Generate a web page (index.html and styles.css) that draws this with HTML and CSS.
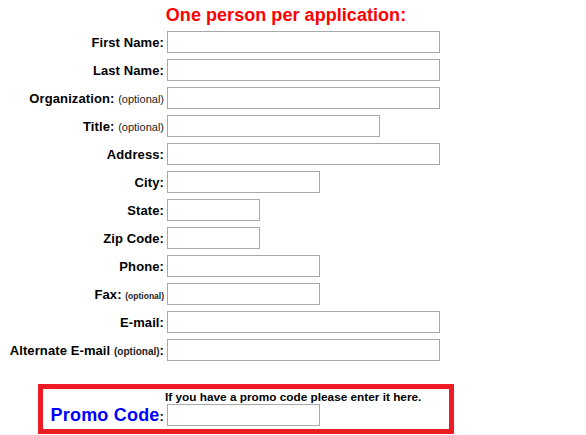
FILE: index.html
```html
<!DOCTYPE html>
<html lang="en">
<head>
  <meta charset="UTF-8" />
  <meta name="viewport" content="width=device-width, initial-scale=1.0" />
  <title>Application</title>
  <link rel="stylesheet" href="styles.css">
</head>
<body>

<div class="form-container">
  <h2>One person per application:</h2>

  <div class="fields">
    <label for="first">First Name:</label>
    <input type="text" id="first" class="long">

    <label for="last">Last Name:</label>
    <input type="text" id="last" class="long">

    <label for="org">Organization: <span class="opt">(optional)</span></label>
    <input type="text" id="org" class="long">

    <label for="title">Title: <span class="opt">(optional)</span></label>
    <input type="text" id="title" class="medium">

    <label for="address">Address:</label>
    <input type="text" id="address" class="long">

    <label for="city">City:</label>
    <input type="text" id="city" class="short">

    <label for="state">State:</label>
    <input type="text" id="state" class="tiny">

    <label for="zip">Zip Code:</label>
    <input type="text" id="zip" class="tiny">

    <label for="phone">Phone:</label>
    <input type="text" id="phone" class="short">

    <label for="fax">Fax: <span class="opt opt-fax">(optional)</span></label>
    <input type="text" id="fax" class="short">

    <label for="email">E-mail:</label>
    <input type="text" id="email" class="long">

    <label for="email2">Alternate E-mail <span class="opt opt-bold">(optional)</span>:</label>
    <input type="text" id="email2" class="long">
  </div>

  <div class="promo-box">
    <span></span>
    <div class="promo-note">If you have a promo code please enter it here.</div>
    <label for="promo"><span class="promo-label">Promo Code</span>:</label>
    <input type="text" id="promo" class="short">
  </div>
</div>

</body>
</html>
```

FILE: styles.css
```css
body {
  font-family: 'Liberation Sans', Arial, sans-serif;
  margin: 5px 8px;
  color: #000;
}
.form-container {
  width: 556px;
}
h2 {
  text-align: center;
  font-size: 18px;
  line-height: 21px;
  margin: 0 0 5px;
  color: #ff0000;
  letter-spacing: 0.05px;
}
.fields {
  display: grid;
  grid-template-columns: 156px auto;
  column-gap: 3px;
  row-gap: 6px;
  align-items: center;
}
label {
  text-align: right;
  font-weight: bold;
  font-size: 13px;
  letter-spacing: 0.1px;
  white-space: nowrap;
}
.opt {
  font-weight: normal;
  font-size: 11px;
  letter-spacing: 0;
  color: #222;
}
.opt-fax {
  font-weight: bold;
  font-size: 8.5px;
}
.opt-bold {
  font-weight: bold;
  font-size: 10px;
}
input[type="text"] {
  height: 22px;
  box-sizing: border-box;
  border: 1px solid #a9a9a9;
  padding: 0 2px;
  margin: 0;
}
.long { width: 273px; }
.medium { width: 213px; }
.short { width: 153px; }
.tiny { width: 93px; }
.promo-box {
  margin: 23px 0 0 30px;
  width: 406px;
  border: 5px solid #ed1c24;
  padding: 1px 0 3px;
  display: grid;
  grid-template-columns: 121px auto;
  column-gap: 3px;
  align-items: center;
}
.promo-note {
  font-size: 11.8px;
  font-weight: bold;
  line-height: 14px;
  margin-left: -2px;
}
.promo-label {
  color: #0000ff;
  font-size: 18px;
  letter-spacing: 0.2px;
}
```
